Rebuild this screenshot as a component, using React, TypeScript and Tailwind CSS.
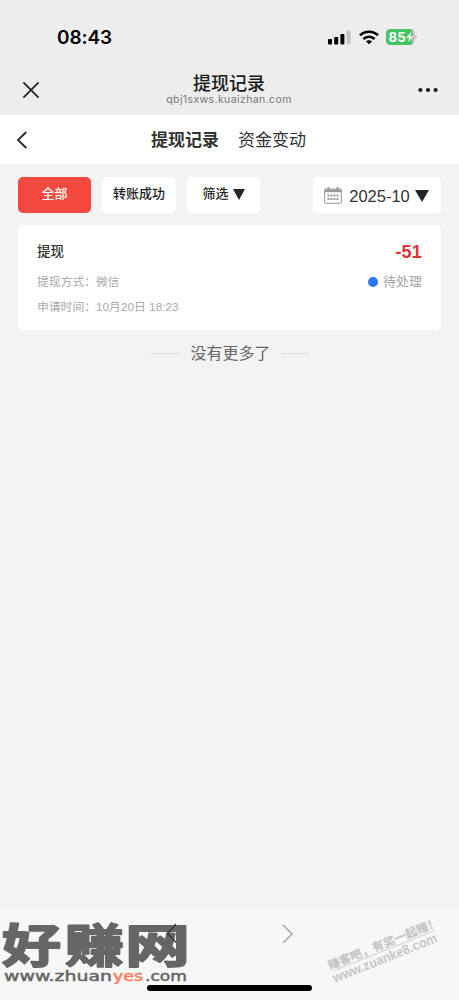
import React from 'react'

const tabs = [
  { label: '提现记录', active: true },
  { label: '资金变动', active: false },
]

const records = [
  {
    title: '提现',
    amount: '-51',
    method: '提现方式：微信',
    time: '申请时间：10月20日 18:23',
    status: '待处理',
  },
]

function StatusBar() {
  return (
    <div className="flex h-[65px] items-start justify-between pl-[57px] pr-[41px] pt-[27px]">
      <span className="font-['Inter'] text-[19px] font-semibold leading-[22px] tracking-[-0.1px] text-black">08:43</span>
      <div className="flex items-center pt-[2px]">
        <svg width="23" height="15" viewBox="0 0 23 15">
          <rect x="0" y="9" width="4" height="5.5" rx="1" />
          <rect x="6.2" y="7" width="4" height="7.5" rx="1" />
          <rect x="12.4" y="4" width="4" height="10.5" rx="1" />
          <rect x="18.6" y="0.5" width="4" height="14" rx="1" fill="#c4c4c4" />
        </svg>
        <svg className="ml-[8px]" width="20" height="15" viewBox="0 0 20 15" fill="none" stroke="#000" strokeWidth="2.7">
          <path d="M1 5.2C6 0.6 14 0.6 19 5.2" />
          <path d="M4.4 8.9C7.6 6 12.4 6 15.6 8.9" />
          <path d="M7 11.3C8.7 9.9 11.3 9.9 13 11.3L10 14.3Z" fill="#000" stroke="none" />
        </svg>
        <svg className="ml-[7px]" width="32" height="16" viewBox="0 0 32 16">
          <rect x="0" y="0" width="28.5" height="16" rx="4.5" fill="#b9b9bb" />
          <path d="M4.5 0H25.5V16H4.5A4.5 4.5 0 0 1 0 11.5V4.5A4.5 4.5 0 0 1 4.5 0Z" fill="#45c465" />
          <path d="M29.5 5.5Q32 8 29.5 10.5Z" fill="#b9b9bb" />
          <text x="2.6" y="12.7" className="font-['Inter'] text-[13px] font-bold" fill="#fff" textLength="17" lengthAdjust="spacingAndGlyphs">85</text>
          <path d="M25.2 2.8L20.2 8.8H23.4L22.1 13.2L27.2 7.2H24Z" fill="#fff" />
        </svg>
      </div>
    </div>
  )
}

function NavBar() {
  return (
    <div className="grid h-[50px] grid-cols-[60px_1fr_60px] items-center">
      <svg className="ml-[22px]" width="18" height="18" viewBox="0 0 18 18" stroke="#1c1c1c" strokeWidth="1.6">
        <path d="M1.4 1.4L16.6 16.6M16.6 1.4L1.4 16.6" />
      </svg>
      <div className="mr-px text-center">
        <h1 className="mt-[-1px] text-[18px] font-medium leading-[22px] text-[#1a1a1a]">提现记录</h1>
        <p className="mt-[-1px] font-['Inter'] text-[10.5px] leading-[12px] tracking-[0.4px] text-[#777]">qbj1sxws.kuaizhan.com</p>
      </div>
      <svg className="ml-[19px]" width="20" height="6" viewBox="0 0 20 6" fill="#111">
        <circle cx="2.4" cy="3" r="2.1" />
        <circle cx="10" cy="3" r="2.1" />
        <circle cx="17.6" cy="3" r="2.1" />
      </svg>
    </div>
  )
}

function TabBar() {
  return (
    <div className="grid h-[49px] grid-cols-[60px_1fr_62px] items-center bg-white">
      <svg className="ml-[16px]" width="12" height="18" viewBox="0 0 12 18" fill="none" stroke="#2b2b2b" strokeWidth="1.9">
        <path d="M10.3 1L2 9L10.3 17" />
      </svg>
      <div className="flex justify-center gap-[19px] pt-[2px] text-[17px] leading-6 text-[#333]">
        {tabs.map((tab) => (
          <span key={tab.label} className={tab.active ? 'font-bold' : ''}>{tab.label}</span>
        ))}
      </div>
    </div>
  )
}

function Triangle({ className }: { className: string }) {
  return (
    <svg className={className} viewBox="0 0 14 12" preserveAspectRatio="none" fill="#242424">
      <path d="M0 0H14L7 12Z" />
    </svg>
  )
}

function CalendarIcon() {
  return (
    <svg width="18" height="17" viewBox="0 0 18 17" fill="none" stroke="#999">
      <rect x="0.6" y="2" width="16.8" height="14.3" rx="1" />
      <path d="M1 3.8H17" strokeWidth="2.8" />
      <path d="M4.5 0V3M13.5 0V3" strokeWidth="2" />
      <path d="M3.5 8.5H14.5M3.5 12H14.5" strokeWidth="2" strokeDasharray="2 1" />
    </svg>
  )
}

function Filters() {
  return (
    <div className="flex h-[36px] items-stretch text-[13px] font-medium text-[#222]">
      <button className="w-[73px] rounded-[5px] bg-[#f3493f] pb-[2px] text-white">全部</button>
      <button className="ml-[11px] w-[74px] rounded-[5px] bg-white pb-[2px]">转账成功</button>
      <button className="ml-[11px] flex w-[73px] items-center justify-center gap-[4px] rounded-[5px] bg-white pb-[2px]">
        筛选
        <Triangle className="h-[11px] w-[12px]" />
      </button>
      <button className="ml-auto flex w-[128px] items-center rounded-[5px] bg-white pl-[11px] font-normal">
        <CalendarIcon />
        <span className="ml-[7px] mt-[2px] w-[61px] whitespace-nowrap text-[16.5px] text-[#333]">2025-10</span>
        <Triangle className="ml-[5px] mt-[1px] h-[12px] w-[14px]" />
      </button>
    </div>
  )
}

function Records() {
  return (
    <>
      {records.map((r) => (
        <div key={r.time} className="mt-[12px] h-[105px] rounded-[5px] bg-white px-[19px] pt-[16px]">
          <div className="flex h-[22px] items-center justify-between">
            <span className="text-[13.5px] font-medium text-[#333]">{r.title}</span>
            <span className="text-[18px] font-bold tracking-[0.2px] text-[#de3339]">{r.amount}</span>
          </div>
          <div className="mt-[9px] flex h-[20px] items-center justify-between">
            <span className="pt-[2px] text-[11.8px] text-[#aaa]">{r.method}</span>
            <span className="flex items-center gap-[5px] text-[13px] text-[#a5a5a5]">
              <i className="size-[10px] rounded-full bg-[#2878f0]" />
              {r.status}
            </span>
          </div>
          <div className="mt-[6px] flex h-[20px] items-center text-[11.8px] text-[#aaa]">{r.time}</div>
        </div>
      ))}
    </>
  )
}

function SiteLogo() {
  return (
    <svg className="absolute left-0 top-0" width="192" height="75" viewBox="0 0 192 75">
      <g fill="#666" stroke="#666" strokeWidth="1.8" strokeLinejoin="round" className="font-['Noto_Sans_CJK_SC'] text-[46px] font-bold">
        <text x="2" y="52.5" textLength="59" lengthAdjust="spacingAndGlyphs">好</text>
        <text x="65" y="52.5" textLength="59" lengthAdjust="spacingAndGlyphs">赚</text>
        <text x="125" y="52.5" textLength="65" lengthAdjust="spacingAndGlyphs">网</text>
      </g>
      <g className="font-['DejaVu_Sans'] text-[14.5px]" fill="#666" stroke="#666" strokeWidth="0.5">
        <text x="4" y="71.5" textLength="108" lengthAdjust="spacingAndGlyphs">www.zhuan</text>
        <text x="113" y="71.5" fill="#fa7a5b" stroke="#fa7a5b" textLength="30" lengthAdjust="spacingAndGlyphs">yes</text>
        <text x="145" y="71.5" textLength="42" lengthAdjust="spacingAndGlyphs">.com</text>
      </g>
      <path d="M176 15L167.5 24.5L176 33.5" fill="none" stroke="#333" strokeWidth="1.2" />
    </svg>
  )
}

function ForumStamp() {
  return (
    <svg className="absolute right-0 top-0" width="139" height="91" viewBox="0 0 139 91">
      <g transform="translate(12.7 62.3) rotate(-21.8)" fill="#c6c6c6">
        <text x="-2" y="-2.5" fontSize="11.5" className="font-black" textLength="119" lengthAdjust="spacingAndGlyphs">赚客吧，有奖一起赚！</text>
        <path d="M0 0H109" stroke="#d2d2d2" strokeWidth="1" />
        <text x="-2" y="11.5" fontSize="13.5" className="font-bold" textLength="111" lengthAdjust="spacingAndGlyphs">www.zuanke8.com</text>
      </g>
    </svg>
  )
}

function BottomBar() {
  return (
    <footer className="relative flex h-[92px] flex-col items-center border-t border-[#eeeeee] bg-[#f7f7f7]">
      <svg className="ml-[116px] mt-[15px]" width="12" height="20" viewBox="0 0 12 20" fill="none" stroke="#aaa" strokeWidth="1.6">
        <path d="M1 1L10 10L1 19" />
      </svg>
      <SiteLogo />
      <ForumStamp />
      <div className="relative mt-[41px] h-[6px] w-[165px] rounded-full bg-black" />
    </footer>
  )
}

export default function App() {
  return (
    <main className="flex h-[1000px] w-[459px] flex-col overflow-hidden bg-[#f3f3f3] font-['Liberation_Sans','Noto_Sans_CJK_SC',sans-serif]">
      <header className="h-[115px] bg-[#ededed]">
        <StatusBar />
        <NavBar />
      </header>
      <TabBar />
      <section className="flex-1 px-[18px] pt-[13px]">
        <Filters />
        <Records />
        <div className="mt-[11px] flex items-center justify-center gap-[10px] pt-px text-[16px] leading-6 text-[#666]">
          <span className="mb-[2px] h-px w-[30px] bg-[#ddd]" />
          没有更多了
          <span className="mb-[2px] h-px w-[28px] bg-[#ddd]" />
        </div>
      </section>
      <BottomBar />
    </main>
  )
}
